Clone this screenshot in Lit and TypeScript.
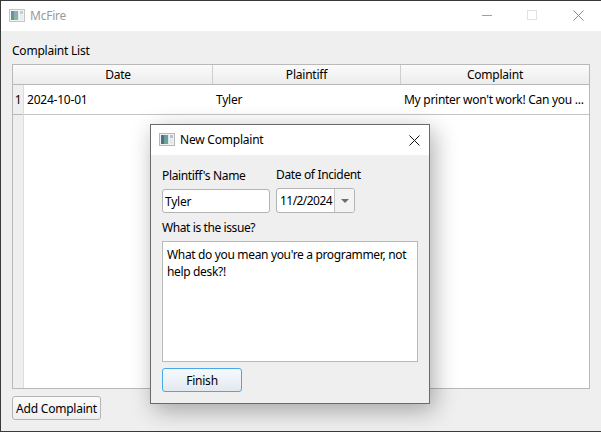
import { LitElement, html, css } from "lit";
import { customElement } from "lit/decorators.js";

const appIcon = html`<svg class="app-icon" width="16" height="16" viewBox="0 0 16 16">
  <rect x="0.5" y="1.5" width="15" height="12" fill="#f2f2f2" stroke="#b4b8ba" />
  <rect x="2" y="3" width="3" height="9" fill="#4a7288" />
  <rect x="5" y="3" width="4" height="5" fill="#6b9aa4" />
  <rect x="5" y="8" width="4" height="4" fill="#68a68d" />
  <rect x="9" y="3" width="1" height="9" fill="#dfe6e6" />
  <rect x="11" y="3" width="3" height="3" fill="#b9c0c4" />
  <rect x="11" y="7" width="3" height="5" fill="#e6e9ea" />
</svg>`;

@customElement("app-root")
export class AppRoot extends LitElement {
  static styles = css`
    :host {
      display: block;
      width: 601px;
      height: 432px;
      font-family: "Noto Sans", "Open Sans", sans-serif;
      font-size: 12px;
      letter-spacing: -0.22px;
      color: #000;
    }
    * {
      box-sizing: border-box;
    }
    .window {
      position: relative;
      width: 601px;
      height: 432px;
      display: flex;
      flex-direction: column;
      background: #efefef;
      border: 1px solid #3a3a3a;
      border-right: none;
    }
    .titlebar {
      height: 30px;
      flex: none;
      display: flex;
      align-items: center;
      background: #fff;
      padding-left: 8px;
      color: #9a9a9a;
    }
    .titlebar .app-icon {
      opacity: 0.8;
    }
    .titlebar .title {
      margin-left: 5px;
      margin-bottom: 2px;
    }
    .controls {
      margin-left: auto;
      display: flex;
      align-items: center;
      gap: 35px;
      padding: 0 17px 2px 0;
    }
    .content {
      flex: 1;
      display: flex;
      flex-direction: column;
      padding: 12px 11px 11px 11px;
      min-height: 0;
    }
    .list-label {
      height: 21px;
      line-height: 15px;
    }
    .table {
      flex: 1;
      display: flex;
      flex-direction: column;
      border: 1px solid #b9b9b9;
      background: #fff;
      min-height: 0;
    }
    .thead {
      display: flex;
      height: 20px;
      flex: none;
      background: linear-gradient(#fbfbfb, #ececec);
      border-bottom: 1px solid #b9b9b9;
    }
    .thead div {
      text-align: center;
      line-height: 19px;
      border-right: 1px solid #cfcfcf;
    }
    .thead div:last-child {
      border-right: none;
      flex: 1;
    }
    .col-date {
      width: 200px;
      padding-left: 11px;
    }
    .col-plaintiff {
      width: 188px;
    }
    .tbody {
      flex: 1;
      display: flex;
      min-height: 0;
    }
    .gutter {
      width: 11px;
      flex: none;
      background: #efefef;
      border-right: 1px solid #dcdcdc;
    }
    .gutter .num {
      height: 30px;
      line-height: 29px;
      text-align: center;
      border-bottom: 1px solid #b9b9b9;
    }
    .rows {
      flex: 1;
      min-width: 0;
    }
    .row {
      display: flex;
      height: 30px;
      line-height: 30px;
      border-bottom: 1px solid #c4c4c4;
    }
    .row div {
      padding-left: 3px;
      white-space: nowrap;
    }
    .row .cell-date {
      width: 189px;
    }
    .row .cell-plaintiff {
      width: 188px;
    }
    .row .cell-complaint {
      flex: 1;
      min-width: 0;
      letter-spacing: -0.28px;
    }
    .add-wrap {
      flex: none;
      padding-top: 7px;
    }
    button {
      font: inherit;
      letter-spacing: inherit;
      color: inherit;
      height: 24px;
      padding: 0;
      border-radius: 3px;
    }
    .add {
      width: 89px;
      border: 1px solid #b4b4b4;
      background: linear-gradient(#fbfbfb, #efefef);
    }
    .dialog {
      position: absolute;
      left: 149px;
      top: 123px;
      width: 280px;
      height: 280px;
      display: flex;
      flex-direction: column;
      background: #efefef;
      border: 1px solid #6a6a6a;
      box-shadow: 4px 6px 22px rgba(0, 0, 0, 0.32);
    }
    .dialog-title {
      height: 30px;
      flex: none;
      display: flex;
      align-items: center;
      background: #fff;
      padding: 0 9px 0 8px;
    }
    .dialog-title .title {
      margin-left: 5px;
      margin-bottom: 2px;
    }
    .dialog-title .close {
      margin-left: auto;
    }
    .form {
      flex: 1;
      display: flex;
      flex-direction: column;
      padding: 8px 11px 0 11px;
      min-height: 0;
    }
    .top-row {
      display: flex;
      gap: 6px;
    }
    .field {
      display: flex;
      flex-direction: column;
    }
    .field label {
      line-height: 17px;
      height: 19px;
      margin-top: 4px;
      letter-spacing: -0.35px;
    }
    .field.date label {
      margin-top: 3px;
    }
    .input {
      width: 108px;
      height: 24px;
      line-height: 23px;
      margin-top: 3px;
      padding-left: 2px;
      background: #fff;
      border: 1px solid #b4b4b4;
      border-radius: 3px;
    }
    .datebox {
      display: flex;
      width: 79px;
      height: 25px;
      margin-top: 3px;
      line-height: 24px;
      border: 1px solid #b4b4b4;
      border-radius: 3px;
      background: #fff;
      overflow: hidden;
    }
    .datebox .value {
      flex: 1;
      padding-left: 3px;
      white-space: nowrap;
      letter-spacing: -0.55px;
    }
    .datebox .arrow {
      width: 20px;
      flex: none;
      display: flex;
      align-items: center;
      justify-content: center;
      background: #f3f3f3;
      border-left: 1px solid #c4c4c4;
    }
    .tri {
      width: 0;
      height: 0;
      border-left: 4px solid transparent;
      border-right: 4px solid transparent;
      border-top: 4px solid #6d6d6d;
    }
    .issue-label {
      line-height: 17px;
      margin-top: 6px;
      height: 22px;
      letter-spacing: -0.4px;
    }
    .textarea {
      height: 121px;
      width: 256px;
      border: 1px solid #b9b9b9;
      background: #fff;
      padding: 4px 4px;
      line-height: 17px;
      letter-spacing: -0.34px;
    }
    .finish {
      width: 80px;
      margin-top: 6px;
      border: 1px solid #4aa8e8;
      background: linear-gradient(#f6fafd, #e2e9ef);
    }
  `;

  render() {
    return html`
      <div class="window">
        <div class="titlebar">
          ${appIcon}
          <span class="title">McFire</span>
          <div class="controls">
            <svg width="11" height="11" viewBox="0 0 11 11"><path d="M1 5.5H11" stroke="#a0a0a0" /></svg>
            <svg width="11" height="11" viewBox="0 0 11 11"><rect x=".5" y=".5" width="9" height="9" fill="none" stroke="#e2e2e2" /></svg>
            <svg width="11" height="11" viewBox="0 0 11 11"><path d="M.5 .5L10.5 10.5M10.5 .5L.5 10.5" stroke="#8a8a8a" /></svg>
          </div>
        </div>
        <div class="content">
          <div class="list-label">Complaint List</div>
          <div class="table">
            <div class="thead">
              <div class="col-date">Date</div>
              <div class="col-plaintiff">Plaintiff</div>
              <div>Complaint</div>
            </div>
            <div class="tbody">
              <div class="gutter"><div class="num">1</div></div>
              <div class="rows">
                <div class="row">
                  <div class="cell-date">2024-10-01</div>
                  <div class="cell-plaintiff">Tyler</div>
                  <div class="cell-complaint">My printer won't work! Can you ...</div>
                </div>
              </div>
            </div>
          </div>
          <div class="add-wrap"><button class="add">Add Complaint</button></div>
        </div>
        <div class="dialog">
          <div class="dialog-title">
            ${appIcon}
            <span class="title">New Complaint</span>
            <svg class="close" width="11" height="11" viewBox="0 0 11 11"><path d="M.5 .5L10.5 10.5M10.5 .5L.5 10.5" stroke="#111" /></svg>
          </div>
          <div class="form">
            <div class="top-row">
              <div class="field">
                <label>Plaintiff's Name</label>
                <div class="input">Tyler</div>
              </div>
              <div class="field date">
                <label>Date of Incident</label>
                <div class="datebox">
                  <div class="value">11/2/2024</div>
                  <div class="arrow"><div class="tri"></div></div>
                </div>
              </div>
            </div>
            <div class="issue-label">What is the issue?</div>
            <div class="textarea">What do you mean you're a programmer, not help desk?!</div>
            <button class="finish">Finish</button>
          </div>
        </div>
      </div>
    `;
  }
}
